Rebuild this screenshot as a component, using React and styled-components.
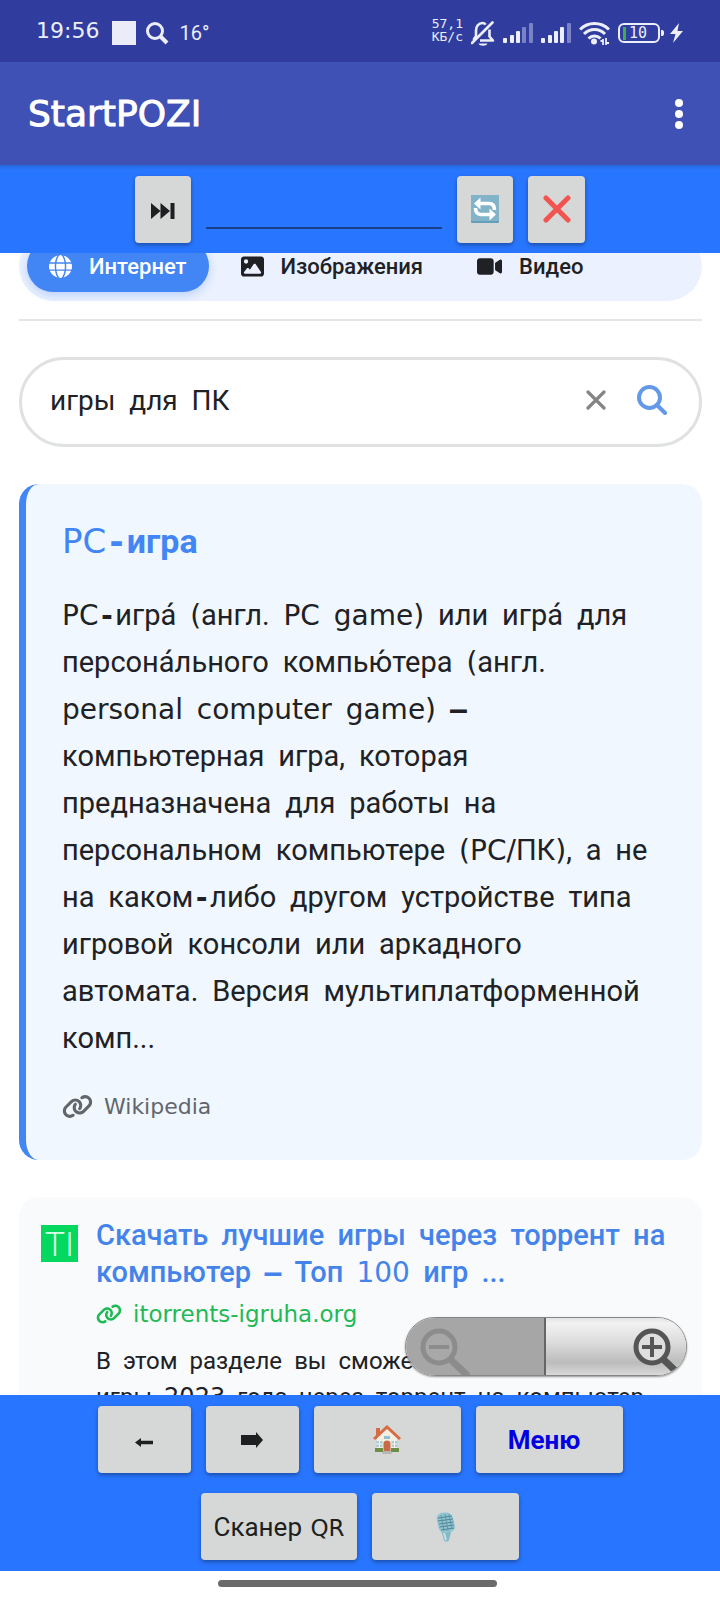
import React from "react";
import styled, { createGlobalStyle, css } from "styled-components";
import { FaGlobe, FaImage, FaVideo, FaLink } from "react-icons/fa6";

const GlobalStyle = createGlobalStyle`
  *, *::before, *::after { box-sizing: border-box; }
  body { margin: 0; background: #ffffff; font-family: Roboto, "Noto Sans", sans-serif; color: #202124; }
  button, input { font-family: inherit; }
  h1, h2, h3, p { margin: 0; }
  svg { display: block; flex: none; }
`;

const PIXEL = `"DejaVu Sans", sans-serif`;
const MONO = `"DejaVu Sans Mono", monospace`;

const Screen = styled.div`
  display: flex;
  flex-direction: column;
  width: 100%;
  height: 100vh;
  overflow: hidden;
`;

/* ---------- text made of two fonts: Latin glyphs and Cyrillic glyphs ---------- */

const Latin = styled.span`
  font-family: ${PIXEL};
  font-size: ${(p) => p.$size}px;
  font-weight: 400;
  line-height: 1;
`;

const Spacer = styled.span`
  font-family: ${MONO};
  font-size: ${(p) => p.$size}px;
  font-weight: ${(p) => (p.$dash ? 700 : 400)};
  line-height: 1;
`;

function Mixed({ text, latin, space }) {
  return text.split(/( +|[\-–]|[A-Za-z0-9()/]+)/).map((part, i) => {
    if (/^ +$/.test(part)) return <Spacer key={i} $size={space}>{part}</Spacer>;
    if (/^[\-–]$/.test(part)) return <Spacer key={i} $size={latin} $dash>{part}</Spacer>;
    if (/^[A-Za-z0-9()/]+$/.test(part)) return <Latin key={i} $size={latin}>{part}</Latin>;
    return part;
  });
}

/* ---------- status bar ---------- */

const StatusBar = styled.div`
  flex: none;
  display: flex;
  align-items: center;
  justify-content: space-between;
  height: 62px;
  padding: 4px 37px 0 36px;
  background: #303d9e;
  color: #eceefa;
`;

const StatusGroup = styled.div`
  display: flex;
  align-items: center;
  gap: ${(p) => p.$gap}px;
`;

const Clock = styled.time`
  font: 22px/26px ${PIXEL};
  margin-bottom: 4px;
`;

const Square = styled.span`
  width: 24px;
  height: 24px;
  margin-left: 3px;
  background: #ececf8;
`;

const Temperature = styled.span`
  font: 20px/26px Roboto, sans-serif;
`;

const Speed = styled.div`
  display: flex;
  flex-direction: column;
  margin-bottom: 7px;
  font: 13px/13px ${MONO};
`;

function SignalIcon({ strong }) {
  return (
    <svg width="30" height="20" viewBox="0 0 30 20" fill="#eceefa" aria-hidden="true">
      <rect x="0" y="15" width="4" height="5" rx="1" />
      <rect x="7" y="12" width="4" height="8" rx="1" />
      <rect x="13" y="8" width="4" height="12" rx="1" />
      <rect x="19" y="4" width="4" height="16" rx="1" opacity={strong ? 1 : 0.4} />
      <rect x="26" y="0" width="4" height="20" rx="1" opacity="0.4" />
    </svg>
  );
}

function BellOffIcon() {
  return (
    <svg width="24" height="25" viewBox="0 0 24 25" fill="none" stroke="#eceefa" strokeWidth="2.6" aria-hidden="true">
      <path d="M14.600 3.600C13.800 2.400 12.600 2 11.500 2C7.500 2 5 5.500 5 9.500V15L2.500 19M9 19.500H22L18.500 15.500V8.500" strokeLinejoin="round" />
      <path d="M1 22L21.500 1.500" strokeLinecap="round" />
      <path d="M7.500 22.500H16.500C15.500 25.500 8.500 25.500 7.500 22.500Z" fill="#eceefa" stroke="none" />
    </svg>
  );
}

function WifiIcon() {
  return (
    <svg width="31" height="24" viewBox="0 0 31 24" fill="none" stroke="#eceefa" strokeWidth="3" aria-hidden="true">
      <path d="M1 8.500C9 .5 22 .5 30 8.500" />
      <path d="M5 13C11 7 20 7 26 13" />
      <path d="M9.500 17.500C13 14 18 14 21.500 17.500" />
      <circle cx="15" cy="20.500" r="3" fill="#eceefa" stroke="none" />
      <path d="M21.500 20H24V24M27 17V22H30M24 18V20M27 22V24" strokeWidth="1.800" />
    </svg>
  );
}

const Battery = styled.span`
  position: relative;
  display: flex;
  align-items: center;
  gap: 3px;
  width: 42px;
  height: 20px;
  padding-left: 3px;
  margin-right: 2px;
  border: 2px solid #eceefa;
  border-radius: 6px;
  font: 15px/16px ${MONO};
  &::before {
    content: "";
    width: 3px;
    height: 13px;
    background: #3fae49;
  }
  &::after {
    content: "";
    position: absolute;
    right: -6px;
    top: 5px;
    width: 3px;
    height: 6px;
    border-radius: 0 2px 2px 0;
    background: #eceefa;
  }
`;

/* ---------- application bar ---------- */

const AppBar = styled.header`
  flex: none;
  display: flex;
  align-items: center;
  justify-content: space-between;
  height: 103px;
  padding: 0 17px 0 28px;
  background: #3f51b5;
  color: #ffffff;
`;

const AppTitle = styled.h1`
  font: 400 36px/44px ${PIXEL};
  -webkit-text-stroke: 1px #ffffff;
`;

const IconButton = styled.button`
  display: flex;
  align-items: center;
  justify-content: center;
  width: 48px;
  height: 48px;
  padding: 0;
  border: 0;
  background: none;
`;

/* ---------- coloured tool bars ---------- */

const Toolbar = styled.div`
  flex: none;
  display: flex;
  align-items: center;
  justify-content: center;
  gap: 15px;
  height: 88px;
  background: linear-gradient(#2767de 0, #2876ff 5px);
`;

const BottomBar = styled.footer`
  flex: none;
  display: flex;
  flex-direction: column;
  align-items: center;
  gap: 20px;
  padding: 11px 0;
  background: #2876ff;
`;

const ButtonRow = styled.div`
  display: flex;
  gap: 15px;
`;

const keyStyle = css`
  display: flex;
  align-items: center;
  justify-content: center;
  width: ${(p) => p.$width}px;
  height: 67px;
  padding: 0;
  border: 0;
  border-radius: 4px;
  background: #d6d7d7;
  color: #1d1f20;
  font-size: 26px;
  line-height: 32px;
  white-space: nowrap;
  text-decoration: none;
  box-shadow: 0 2px 4px rgba(0, 0, 0, 0.35);
`;

const Key = styled.button`${keyStyle}`;

const MenuLink = styled.a`
  ${keyStyle}
  padding-right: 10px;
  color: #0000e0;
  font-weight: 700;
`;

const AddressInput = styled.input`
  width: 236px;
  height: 40px;
  padding: 0;
  border: 0;
  border-bottom: 2px solid #173f8c;
  background: none;
  outline: none;
  font-size: 26px;
`;

/* ---------- search page ---------- */

const Page = styled.main`
  position: relative;
  flex: 1;
  min-height: 0;
  overflow: hidden;
  background: #ffffff;
`;

const Scrolled = styled.div`
  margin-top: -22px;
  padding: 0 18px 0 19px;
`;

const Tabs = styled.nav`
  display: flex;
  align-items: center;
  height: 70px;
  padding: 0 8px;
  border-radius: 35px;
  background: #ebf1fe;
`;

const Tab = styled.a`
  display: flex;
  align-items: center;
  gap: 17px;
  height: 52px;
  padding: 0 22px;
  margin-right: 10px;
  border-radius: 26px;
  color: #202124;
  font-size: 22px;
  font-weight: 500;
  text-decoration: none;
  ${(p) => p.$active && css`
    color: #ffffff;
    background: #4285f4;
    box-shadow: 0 3px 10px rgba(66, 133, 244, 0.3);
  `}
`;

const Divider = styled.hr`
  height: 2px;
  margin: 18px 0 36px;
  border: 0;
  background: #e4e5e7;
`;

const SearchBox = styled.form`
  display: flex;
  align-items: center;
  height: 90px;
  padding: 0 19px 4px 28px;
  border: 3px solid #dfe1e3;
  border-radius: 45px;
`;

const SearchInput = styled.input`
  flex: 1;
  min-width: 0;
  height: 50px;
  padding: 0;
  border: 0;
  outline: none;
  background: none;
  color: #202124;
  font-size: 28px;
`;

const SearchAction = styled(IconButton)`
  width: 56px;
`;

const WikiCard = styled.article`
  margin-top: 37px;
  padding: 37px 40px 38px 36px;
  border-left: 7px solid #4285f4;
  border-radius: 20px;
  background: #f0f7ff;
`;

const WikiTitle = styled.h2`
  color: #4285f4;
  font-size: 34px;
  font-weight: 700;
  line-height: 40px;
`;

const WikiText = styled.p`
  margin-top: 31px;
  font-size: 29px;
  line-height: 47px;
`;

const SourceLink = styled.a`
  display: flex;
  align-items: center;
  gap: 11px;
  text-decoration: none;
  font-family: ${PIXEL};
`;

const WikiSource = styled(SourceLink)`
  margin-top: 29px;
  color: #62666b;
  font-size: 22px;
  line-height: 30px;
`;

const ResultCard = styled.article`
  display: flex;
  align-items: flex-start;
  gap: 18px;
  margin-top: 37px;
  padding: 20px 22px;
  border-radius: 20px;
  background: #f8fafc;
`;

const Favicon = styled.span`
  flex: none;
  width: 37px;
  height: 37px;
  margin-top: 8px;
  background: #04d85f;
  color: #d8ffe6;
  font: 300 34px/38px Roboto, sans-serif;
  text-align: center;
`;

const ResultBody = styled.div`
  flex: 1;
  min-width: 0;
`;

const ResultTitle = styled.h3`
  font-size: 29px;
  font-weight: 500;
  line-height: 37px;
  a { color: #4484ea; text-decoration: none; }
`;

const ResultSource = styled(SourceLink)`
  margin-top: 9px;
  color: #1fb955;
  font-size: 23px;
  line-height: 28px;
`;

const ResultText = styled.p`
  margin-top: 15px;
  font-size: 24px;
  line-height: 36px;
`;

/* ---------- floating zoom control ---------- */

const ZoomControl = styled.div`
  position: absolute;
  right: 33px;
  bottom: 19px;
  display: flex;
  width: 282px;
  height: 59px;
  border: 1px solid #858585;
  border-radius: 30px;
  overflow: hidden;
  box-shadow: 0 1px 2px rgba(0, 0, 0, 0.4);
`;

const ZoomButton = styled.button`
  flex: none;
  width: 50%;
  display: flex;
  justify-content: ${(p) => (p.$off ? "flex-start" : "flex-end")};
  align-items: flex-end;
  padding: 0 ${(p) => (p.$off ? 13 : 6)}px 0;
  border: 0;
  border-right: ${(p) => (p.$off ? "2px solid #666666" : "0")};
  background: ${(p) => (p.$off ? "#a6a6a6" : "linear-gradient(#e4e4e4 0%, #f1f1f1 10%, #dedede 40%, #bcbcbc 78%, #d8d8d8 100%)")};
`;

function Magnifier({ plus }) {
  const ink = plus ? "#555555" : "#8c8c8c";
  return (
    <svg width={plus ? 48 : 54} height="48" viewBox={`0 0 ${plus ? 48 : 54} 48`} fill="none" stroke={ink} aria-hidden="true">
      <path d="M32 33L49 49" strokeWidth="7" />
      <circle cx="20" cy="20" r="16" strokeWidth="5" fill={plus ? "#dedede" : "#a8a8a8"} />
      <path d={plus ? "M10 20H30M20 10V30" : "M10 20H30"} strokeWidth="4" />
    </svg>
  );
}

/* ---------- navigation handle ---------- */

const NavBar = styled.div`
  flex: none;
  display: flex;
  justify-content: center;
  height: 29px;
  padding: 9px 5px 0 0;
  background: #ffffff;
  &::before {
    content: "";
    width: 279px;
    height: 7px;
    border-radius: 4px;
    background: #6a6a6a;
  }
`;

function RefreshIcon() {
  return (
    <svg width="28" height="28" viewBox="0 0 28 28" aria-hidden="true">
      <rect width="28" height="28" rx="1" fill="#659fb7" />
      <rect width="28" height="26" rx="1" fill="#82b3c8" />
      <g fill="none" stroke="#ffffff" strokeWidth="3.600">
        <path d="M8 8.500H18C22 8.500 23.500 10.500 23.500 15" />
        <path d="M20 19.500H10C6 19.500 4.500 17 4.500 13" />
      </g>
      <path d="M9.500 2.500V14.500L3 8.500ZM18.500 13.500V25.500L25 19.500Z" fill="#ffffff" />
    </svg>
  );
}

function HouseIcon() {
  return (
    <svg width="28" height="29" viewBox="0 0 28 29" aria-hidden="true">
      <path d="M3 3H7V14H3Z" fill="#d66c43" />
      <path d="M4 13L14 3L24 13V26H4Z" fill="#f5eee3" />
      <path d="M14 0L28 13L26 15L14 4L2 15L0 13Z" fill="#d66c43" />
      <path d="M11 11H17V14H11Z" fill="#8fbfd0" />
      <path d="M3.500 16H9.500V22H3.500ZM18.500 16H24.500V22H18.500Z" fill="#a9ccd4" />
      <path d="M6.500 16V22M3.500 19H9.500M21.500 16V22M18.500 19H24.500" stroke="#f5f5ef" />
      <path d="M10.500 27V18C10.500 14.500 17.500 14.500 17.500 18V27Z" fill="#c96a47" />
      <path d="M2 23H10V27H2ZM18 23H26V27H18Z" fill="#6d8f45" />
      <path d="M10 26H18L19 29H9Z" fill="#b6b6b2" />
    </svg>
  );
}

function MicIcon() {
  return (
    <svg width="20" height="30" viewBox="0 0 20 30" aria-hidden="true">
      <path d="M5 18L16 16L13 28C12 30 9 30 8 28Z" fill="#82b8c7" />
      <path d="M1 9C0 3 3 1 8 0.500C13 0 16 2 17 6L19 15C19 18 16 20 12 20.500C7 21 4 20 3 17Z" fill="#8fc5d3" />
      <path d="M2 6L16 4M2 9L17 7M3 12L17.500 10M3.500 15L18 13M5 18L18 16" stroke="#527f90" strokeWidth="1" />
      <path d="M5 3L8 19M9 2L12 19M13 2L16 17" stroke="#6296a7" strokeWidth="1" />
      <path d="M8 21L10 28" stroke="#c3e2ea" strokeWidth="2" />
    </svg>
  );
}

export default function App() {
  return (
    <Screen>
      <GlobalStyle />
      <StatusBar>
        <StatusGroup $gap={10}>
          <Clock>19:56</Clock>
          <Square />
          <svg width="23" height="23" viewBox="0 0 23 23" fill="none" stroke="#eceefa" aria-hidden="true">
            <circle cx="9" cy="9" r="7.500" strokeWidth="3" />
            <path d="M14 14L21 21" strokeWidth="4" />
          </svg>
          <Temperature>16°</Temperature>
        </StatusGroup>
        <StatusGroup $gap={8}>
          <Speed><span>57,1</span><span>КБ/c</span></Speed>
          <BellOffIcon />
          <SignalIcon />
          <SignalIcon strong />
          <WifiIcon />
          <Battery>10</Battery>
          <svg width="13" height="20" viewBox="0 0 13 20" fill="#eceefa" aria-hidden="true">
            <path d="M9 0L0 11H5.500L3 20L13 8H7.500Z" />
          </svg>
        </StatusGroup>
      </StatusBar>

      <AppBar>
        <AppTitle>StartPOZI</AppTitle>
        <IconButton aria-label="Ещё">
          <svg width="8" height="30" viewBox="0 0 8 30" fill="#ffffff" aria-hidden="true">
            <circle cx="4" cy="4" r="4" />
            <circle cx="4" cy="15" r="4" />
            <circle cx="4" cy="26" r="4" />
          </svg>
        </IconButton>
      </AppBar>

      <Toolbar>
        <Key $width={56} aria-label="Перейти">
          <svg width="24" height="20" viewBox="0 -4 24 20" fill="#1d1f20" aria-hidden="true">
            <path d="M0 0L9.500 8L0 16ZM9.500 0L19 8L9.500 16ZM19.500 0H23.500V16H19.500Z" />
          </svg>
        </Key>
        <AddressInput aria-label="Адрес" />
        <Key $width={56} aria-label="Обновить"><RefreshIcon /></Key>
        <Key $width={57} aria-label="Закрыть">
          <svg width="28" height="28" viewBox="0 0 28 28" stroke="#f2544f" strokeWidth="5" strokeLinecap="round" aria-hidden="true">
            <path d="M3 3L25 25M25 3L3 25" />
          </svg>
        </Key>
      </Toolbar>

      <Page>
        <Scrolled>
          <Tabs>
            <Tab href="#web" $active><FaGlobe size={23} />Интернет</Tab>
            <Tab href="#images"><FaImage size={23} />Изображения</Tab>
            <Tab href="#video"><FaVideo size={25} />Видео</Tab>
          </Tabs>
          <Divider />
          <SearchBox>
            <SearchInput aria-label="Поиск" defaultValue="игры  для  ПК" />
            <SearchAction type="button" aria-label="Очистить">
              <svg width="20" height="20" viewBox="0 0 20 20" stroke="#858585" strokeWidth="3.200" strokeLinecap="round" aria-hidden="true">
                <path d="M2 2L18 18M18 2L2 18" />
              </svg>
            </SearchAction>
            <SearchAction type="button" aria-label="Найти">
              <svg width="30" height="30" viewBox="0 0 30 30" fill="none" stroke="#6499ea" strokeWidth="4" strokeLinecap="round" aria-hidden="true">
                <circle cx="12.500" cy="12.500" r="10.500" />
                <path d="M20 20L28 28" />
              </svg>
            </SearchAction>
          </SearchBox>

          <WikiCard>
            <WikiTitle><Mixed text="PC-игра" latin={34} space={30} /></WikiTitle>
            <WikiText>
              <Mixed
                latin={28}
                space={23}
                text="PC-игра́ (англ. PC game) или игра́ для персона́льного компью́тера (англ. personal computer game) – компьютерная игра, которая предназначена для работы на персональном компьютере (PC/ПК), а не на каком-либо другом устройстве типа игровой консоли или аркадного автомата. Версия мультиплатформенной комп..."
              />
            </WikiText>
            <WikiSource href="#wikipedia"><FaLink size={31} />Wikipedia</WikiSource>
          </WikiCard>

          <ResultCard>
            <Favicon>TI</Favicon>
            <ResultBody>
              <ResultTitle>
                <a href="#result"><Mixed text="Скачать лучшие игры через торрент на компьютер – Топ 100 игр ..." latin={28} space={22} /></a>
              </ResultTitle>
              <ResultSource href="#site"><FaLink size={26} />itorrents-igruha.org</ResultSource>
              <ResultText>
                <Mixed text="В этом разделе вы сможете скачать лучшие игры 2023 года через торрент на компьютер" latin={24} space={20} />
              </ResultText>
            </ResultBody>
          </ResultCard>
        </Scrolled>
        <ZoomControl>
          <ZoomButton $off disabled aria-label="Уменьшить"><Magnifier /></ZoomButton>
          <ZoomButton aria-label="Увеличить"><Magnifier plus /></ZoomButton>
        </ZoomControl>
      </Page>

      <BottomBar>
        <ButtonRow>
          <Key $width={93} aria-label="Назад">
            <svg width="18" height="15" viewBox="0 -6 18 15" fill="#1d1f20" aria-hidden="true">
              <path d="M0 4.500L6 0V2.800H18V6.200H6V9Z" />
            </svg>
          </Key>
          <Key $width={93} aria-label="Вперёд">
            <svg width="22" height="16" viewBox="0 0 22 16" fill="#1d1f20" aria-hidden="true">
              <path d="M22 8L15 0V3H0V13H15V16Z" />
            </svg>
          </Key>
          <Key $width={147} aria-label="Домой"><HouseIcon /></Key>
          <MenuLink $width={147} href="#menu">Меню</MenuLink>
        </ButtonRow>
        <ButtonRow>
          <Key $width={156}><span><Mixed text="Сканер QR" latin={23} space={14} /></span></Key>
          <Key $width={147} aria-label="Голосовой поиск"><MicIcon /></Key>
        </ButtonRow>
      </BottomBar>
      <NavBar />
    </Screen>
  );
}
